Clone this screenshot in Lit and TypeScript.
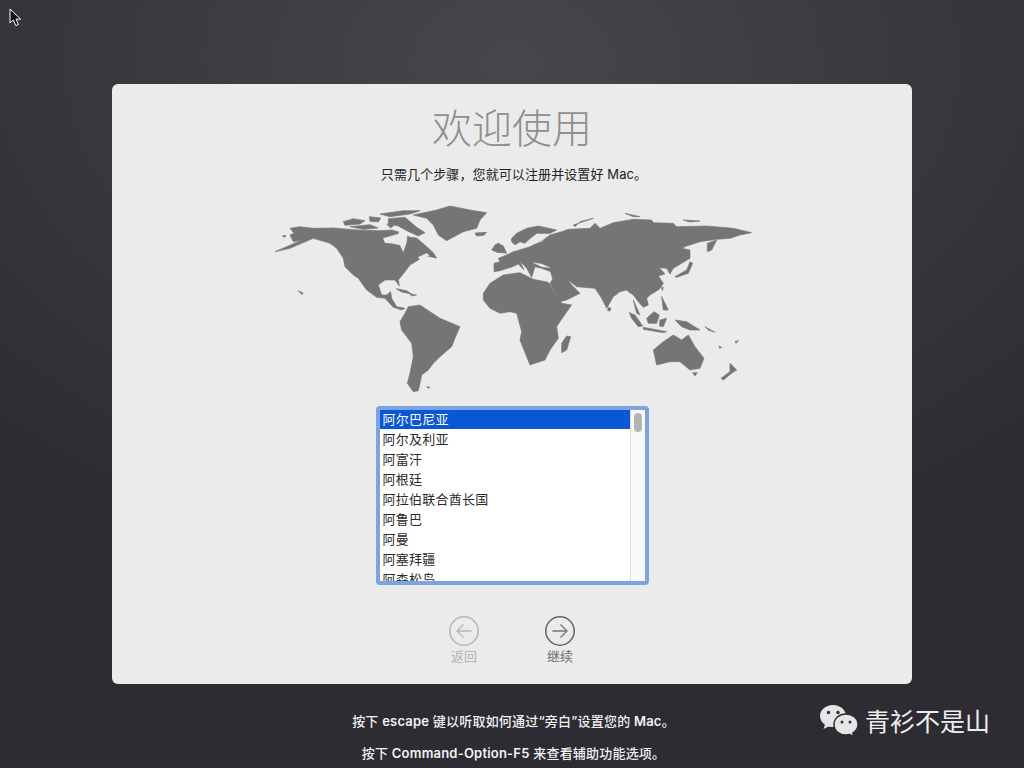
import { LitElement, css, html, svg } from "lit";
import { customElement } from "lit/decorators.js";

// outlines traced from 3x crops, west half and east half have their own origin
const WEST = [
  "60,85 90,80 130,85 190,84 215,86 260,90 330,92 365,90 400,100 420,112 440,114 470,140 490,158 500,174 470,168 445,180 420,195 405,215 385,240 388,258 375,240 345,240 325,255 335,285 350,285 362,275 365,295 380,320 405,325 395,330 370,322 345,295 320,292 290,270 265,235 250,225 225,200 220,175 200,145 180,130 130,115 95,130 60,145 15,155 55,138 95,120 70,125 60,105 72,100",
  "415,320 450,315 480,335 510,355 570,380 555,415 545,440 510,470 490,490 475,510 455,525 450,550 445,572 430,575 412,550 420,520 430,470 425,430 395,390 390,365 405,340",
  "430,45 500,30 540,18 600,30 650,38 630,60 620,85 580,95 530,122 505,105 490,75 470,55",
  "330,42 400,32 450,32 420,42 360,50",
  "220,65 250,56 285,62 270,72 225,76",
  "240,80 300,74 325,84 280,88",
  "355,56 405,52 440,82 465,98 445,108 410,92 385,78 355,72",
  "298,50 332,54 325,66 300,64",
  "350,72 372,76 362,84",
  "615,99 650,97 642,106 620,108",
  "672,150 685,130 700,138 710,160 680,155",
  "725,118 745,102 750,125 730,130",
  "378,266 410,272 425,282 395,276",
  "420,282 440,285 425,288",
  "470,560 480,562 475,565",
  "85,272 100,280 95,283",
  "37,108 48,106 44,112",
];

// sea cut out of the land, in the panel colour
const WEST_SEA = [
  "340,115 365,108 385,102 392,86 412,98 410,125 400,155 390,135 365,130 345,128",
  "445,172 470,160 478,166 450,180",
];

const EAST = [
  "130,120 150,105 185,95 205,88 270,85 285,70 300,85 340,68 400,58 455,60 460,68 520,70 530,80 620,78 700,85 755,98 720,105 690,115 650,118 600,125 560,138 545,145 570,150 570,175 545,190 520,205 510,222 500,205 478,203 495,222 475,228 490,250 478,268 450,285 440,295 445,315 430,322 415,305 400,285 385,275 380,270 360,275 340,290 320,325 305,295 285,265 250,262 230,260 205,240 215,255 240,280 200,300 180,305 150,250 158,238 152,215 125,205 105,200 95,232 80,205 60,182 72,210 55,192 38,200 0,212 -18,215 -18,190 0,185 -5,175 20,165 40,155 75,145 90,140",
  "35,115 50,100 80,85 115,78 170,90 150,100 110,100 85,120 75,130 60,125 45,135 35,125",
  "-50,300 -50,280 -30,250 10,225 60,218 100,238 145,247 185,310 215,315 190,350 170,380 175,415 150,450 135,480 90,495 60,420 65,395 50,340 30,335 0,340 -30,325",
  "200,408 212,410 200,450 185,458 185,430",
  "460,450 490,425 520,405 545,420 565,405 585,440 612,475 600,505 570,510 540,485 510,485 470,495",
  "690,490 710,510 695,520 670,540 663,535 690,515",
  "578,518 592,518 585,528",
  "525,230 560,210 570,185 578,190 565,220 530,232",
  "622,130 650,120 635,150 622,155",
  "388,338 405,345 428,378 415,380 395,355",
  "430,382 500,395 490,398 430,388",
  "440,355 462,335 478,345 470,370 445,370",
  "480,360 500,355 490,380 478,378",
  "525,360 560,365 600,390 570,390 545,380",
  "485,290 505,330 490,330",
  "400,300 420,345 410,340",
  "325,322 333,325 330,333 323,332",
  "485,262 490,262 487,272",
  "220,75 280,55 240,65 225,80",
  "375,40 420,50 400,50",
  "550,60 600,63 570,66",
  "615,380 645,397 625,390",
  "658,438 665,443 658,445",
  "705,425 716,422 708,430",
  "-5,130 15,155 -5,158 -25,150 -15,135",
];

const EAST_SEA = [
  "100,188 125,192 150,203 125,200",
  "130,122 100,132 120,124",
];

const COUNTRIES = [
  "阿尔巴尼亚",
  "阿尔及利亚",
  "阿富汗",
  "阿根廷",
  "阿拉伯联合酋长国",
  "阿鲁巴",
  "阿曼",
  "阿塞拜疆",
  "阿森松岛",
];

@customElement("app-root")
export class AppRoot extends LitElement {
  static styles = css`
    :host {
      display: block;
      position: relative;
      width: 1024px;
      height: 768px;
      overflow: hidden;
      background: radial-gradient(ellipse 760px 520px at 50% 8%, #46464c 0%, #39393f 50%, #2c2c32 100%);
      font-family: Inter, "Noto Sans CJK SC", sans-serif;
    }
    .panel {
      box-sizing: border-box;
      width: 800px;
      height: 600px;
      margin: 0 auto;
      position: relative;
      top: 84px;
      padding-top: 17px;
      background: #ebebeb;
      border-radius: 6px;
      display: flex;
      flex-direction: column;
      align-items: center;
    }
    .title {
      height: 56px;
      line-height: 56px;
      font-size: 40px;
      font-weight: 300;
      color: #8f8f8f;
    }
    .subtitle {
      margin-top: 7px;
      padding-left: 4px;
      height: 20px;
      line-height: 20px;
      font-size: 13px;
      letter-spacing: 0.1px;
      color: #222;
    }
    .map {
      display: block;
      margin-top: 16px;
      width: 490px;
      height: 200px;
      filter: blur(0.35px);
    }
    .map polygon {
      fill: #757575;
      stroke: #757575;
      stroke-width: 2;
      stroke-linejoin: round;
    }
    .map polygon.sea {
      fill: #ebebeb;
      stroke: #ebebeb;
      stroke-width: 1;
    }
    .list {
      box-sizing: border-box;
      margin-top: 6px;
      width: 273px;
      height: 179px;
      border: 4px solid #7ba3e6;
      border-radius: 4px;
      background: #fff;
      display: flex;
      overflow: hidden;
    }
    .rows {
      flex: 1;
      overflow: hidden;
    }
    .row {
      height: 20px;
      line-height: 20px;
      padding-left: 3px;
      font-size: 13px;
      letter-spacing: 0.25px;
      color: #2a2a2a;
      white-space: nowrap;
    }
    .row:first-child {
      margin-top: -1px;
    }
    .row.selected {
      background: #0a57d6;
      color: #fff;
    }
    .track {
      box-sizing: border-box;
      width: 15px;
      padding: 3px 3px 0;
      border-left: 1px solid #ddd;
      background: #fafafa;
    }
    .thumb {
      width: 8px;
      height: 19px;
      border-radius: 4px;
      background: #b4b4b4;
    }
    .nav {
      margin-top: 31px;
      display: flex;
      gap: 36px;
    }
    .btn {
      width: 60px;
      display: flex;
      flex-direction: column;
      align-items: center;
      gap: 2px;
      font-size: 13px;
      line-height: 16px;
      color: #6f6f6f;
    }
    .btn svg {
      display: block;
      width: 30px;
      height: 30px;
      fill: none;
      stroke: #666;
      stroke-width: 1.5;
    }
    .btn svg path {
      stroke: #777;
      stroke-width: 1.3;
    }
    .btn.off {
      color: #b4b4b4;
    }
    .btn.off svg,
    .btn.off svg path {
      stroke: #b6b6b6;
    }
    .footer {
      position: relative;
      top: 84px;
      margin-top: 27px;
      display: flex;
      flex-direction: column;
      align-items: center;
      gap: 12px;
      padding-left: 3px;
      font-size: 13px;
      letter-spacing: 0.2px;
      line-height: 20px;
      font-weight: 500;
      color: #f2f2f2;
    }
    .footer b {
      font-weight: 600;
    }
    .cursor {
      position: absolute;
      left: 9px;
      top: 8px;
      width: 13px;
      height: 19px;
    }
    .mark {
      position: absolute;
      left: 819px;
      top: 703px;
      display: flex;
      align-items: center;
      gap: 6px;
      height: 38px;
      font-size: 25px;
      color: #efefef;
    }
    .mark span {
      margin-bottom: 4px;
    }
    .mark svg {
      width: 40px;
      height: 36px;
    }
  `;

  private arrow(back: boolean) {
    const d = back ? "M22.500 15H8M14.500 8.500L8 15l6.500 6.500" : "M7.500 15H22M15.500 8.500L22 15l-6.500 6.500";
    return svg`<circle cx="15" cy="15" r="14.200"></circle><path d=${d}></path>`;
  }

  private land(shapes: string[], sea: string[]) {
    return [
      ...shapes.map((p) => svg`<polygon points=${p}></polygon>`),
      ...sea.map((p) => svg`<polygon class="sea" points=${p}></polygon>`),
    ];
  }

  render() {
    return html`
      <div class="panel">
        <div class="title">欢迎使用</div>
        <div class="subtitle">只需几个步骤，您就可以注册并设置好 Mac。</div>
        <svg class="map" viewBox="-3 0 490 200">
          <g transform="scale(0.3333)">${this.land(WEST, WEST_SEA)}</g>
          <g transform="translate(230 0) scale(0.3333)">${this.land(EAST, EAST_SEA)}</g>
        </svg>
        <div class="list">
          <div class="rows">
            ${COUNTRIES.map((c, i) => html`<div class="row ${i === 0 ? "selected" : ""}">${c}</div>`)}
          </div>
          <div class="track"><div class="thumb"></div></div>
        </div>
        <div class="nav">
          <div class="btn off"><svg viewBox="0 0 30 30">${this.arrow(true)}</svg>返回</div>
          <div class="btn"><svg viewBox="0 0 30 30">${this.arrow(false)}</svg>继续</div>
        </div>
      </div>
      <div class="footer">
        <div>按下 <b>escape</b> 键以听取如何通过“旁白”设置您的 <b>Mac</b>。</div>
        <div>按下 <b>Command-Option-F5</b> 来查看辅助功能选项。</div>
      </div>
      <svg class="cursor" viewBox="0 0 13 19">
        <path d="M1 1v14l3.400-3 2.400 5.600 2.600-1.100-2.400-5.400h4.600z" fill="#111" stroke="#fff" stroke-width="1"></path>
      </svg>
      <div class="mark">
        <svg viewBox="0 0 40 36">
          <path d="M14 1C6.500 1 1 6 1 12c0 3.600 2 6.700 5 8.700L4.500 25l5.200-2.600c1.400.4 2.800.6 4.300.6 7.500 0 13-5 13-11S21.500 1 14 1z" fill="#e6e6e6"></path>
          <path d="M27 10c-6.900 0-12 4.600-12 10.500S20.100 31 27 31c1.300 0 2.500-.2 3.700-.5l4.300 2.500-1.200-3.900c3.100-1.900 5.200-5 5.200-8.600C39 14.600 33.900 10 27 10z" fill="#e6e6e6" stroke="#2c2c32" stroke-width="1.500"></path>
          <circle cx="9.500" cy="8.500" r="1.700" fill="#2c2c32"></circle>
          <circle cx="19" cy="8.500" r="1.700" fill="#2c2c32"></circle>
          <circle cx="23" cy="18" r="1.500" fill="#2c2c32"></circle>
          <circle cx="31" cy="18" r="1.500" fill="#2c2c32"></circle>
        </svg>
        <span>青衫不是山</span>
      </div>
    `;
  }
}
